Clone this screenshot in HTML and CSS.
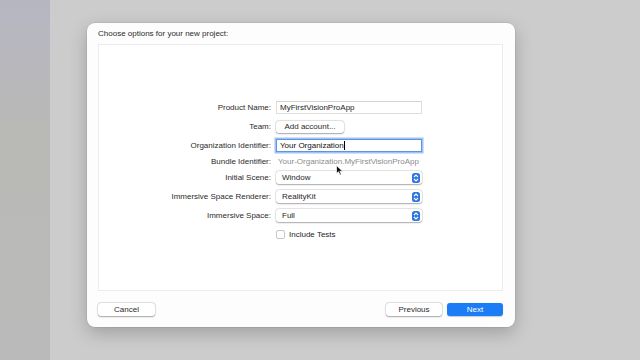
FILE: index.html
```html
<!DOCTYPE html>
<html>
<head>
<meta charset="utf-8">
<link rel="stylesheet" href="styles.css">
</head>
<body>
<div class="strip"></div>
<div class="desk">
  <div class="dialog">
    <div class="title">Choose options for your new project:</div>
    <div class="panel">
      <div class="form">
        <div class="lbl">Product Name:</div>
        <div class="ctl"><div class="field">MyFirstVisionProApp</div></div>
        <div class="lbl">Team:</div>
        <div class="ctl"><div class="btn small">Add account...</div></div>
        <div class="lbl">Organization Identifier:</div>
        <div class="ctl"><div class="field focus">Your Organization<span class="caret"></span></div></div>
        <div class="lbl short">Bundle Identifier:</div>
        <div class="ctl short"><div class="muted">Your-Organization.MyFirstVisionProApp</div></div>
        <div class="lbl">Initial Scene:</div>
        <div class="ctl"><div class="popup"><span>Window</span><span class="step"><svg width="6" height="8" viewBox="0 0 6 8"><path d="M1 3 L3 1 L5 3 M1 5 L3 7 L5 5" fill="none" stroke="#fff" stroke-width="1.1"/></svg></span></div></div>
        <div class="lbl">Immersive Space Renderer:</div>
        <div class="ctl"><div class="popup"><span>RealityKit</span><span class="step"><svg width="6" height="8" viewBox="0 0 6 8"><path d="M1 3 L3 1 L5 3 M1 5 L3 7 L5 5" fill="none" stroke="#fff" stroke-width="1.1"/></svg></span></div></div>
        <div class="lbl">Immersive Space:</div>
        <div class="ctl"><div class="popup"><span>Full</span><span class="step"><svg width="6" height="8" viewBox="0 0 6 8"><path d="M1 3 L3 1 L5 3 M1 5 L3 7 L5 5" fill="none" stroke="#fff" stroke-width="1.1"/></svg></span></div></div>
        <div class="lbl"></div>
        <div class="ctl"><label class="check"><span class="box"></span>Include Tests</label></div>
      </div>
      <svg class="pointer" width="8" height="11" viewBox="0 0 8 11"><path d="M0.5 0.5 L0.5 8.5 L2.5 6.7 L4 10 L5.3 9.4 L3.9 6.2 L6.6 6.2 Z" fill="#111" stroke="#fff" stroke-width="0.7"/></svg>
    </div>
    <div class="footer">
      <div class="btn wide">Cancel</div>
      <div class="right">
        <div class="btn nav">Previous</div>
        <div class="btn nav primary">Next</div>
      </div>
    </div>
  </div>
</div>
</body>
</html>
```
FILE: styles.css
```css
* { box-sizing: border-box; }
html, body { margin: 0; padding: 0; width: 640px; height: 360px; overflow: hidden; }
body {
  display: flex;
  font-family: "Liberation Sans", Arial, sans-serif;
  font-size: 8px;
  color: #262626;
  background: #cbcbcb;
}
.strip {
  width: 50px;
  height: 360px;
  background: linear-gradient(180deg, #b6b6c2 0%, #b9b9b6 40%, #bababa 100%);
}
.desk {
  flex: 1;
  padding: 23px 0 0 37px;
  background: #cccccc;
}
.dialog {
  width: 428px;
  height: 304px;
  background: #fdfdfd;
  border-radius: 8px;
  box-shadow: 0 6px 18px rgba(0,0,0,0.22), 0 0 0 0.5px rgba(0,0,0,0.12);
  padding: 6px 12px 0 11px;
  display: flex;
  flex-direction: column;
}
.title {
  flex: none;
  height: 15px;
  line-height: 10px;
  font-size: 8px;
  color: #2b2b2b;
}
.panel {
  flex: none;
  position: relative;
  height: 247px;
  background: #fff;
  border: 1px solid #ececec;
  padding-top: 56px;
}
.form {
  display: grid;
  grid-template-columns: 172px 146px;
  column-gap: 5px;
  row-gap: 6px;
  align-items: center;
}
.lbl {
  text-align: right;
  height: 13px;
  line-height: 13px;
  white-space: nowrap;
  color: #2a2a2a;
}
.ctl { height: 13px; display: flex; align-items: center; }
.lbl.short, .ctl.short { height: 7px; line-height: 7px; }
.field {
  width: 146px;
  height: 13px;
  line-height: 12px;
  padding-left: 3px;
  border: 1px solid #dedede;
  border-top-color: #d2d2d2;
  background: #fff;
  white-space: nowrap;
}
.field.focus {
  border: 1px solid #5a95e6;
  box-shadow: 0 0 0 1.5px #9fc2f2;
  color: #111;
}
.caret {
  display: inline-block;
  width: 1px;
  height: 9px;
  background: #000;
  vertical-align: -2px;
}
.muted { color: #8c8c8c; white-space: nowrap; padding-left: 2px; }
.btn {
  height: 12px;
  line-height: 12px;
  text-align: center;
  background: #fff;
  border-radius: 3px;
  box-shadow: 0 0.5px 1.5px rgba(0,0,0,0.3), 0 0 0 0.5px rgba(0,0,0,0.12);
  white-space: nowrap;
  color: #2a2a2a;
}
.btn.small { width: 68px; }
.popup {
  width: 146px;
  height: 13px;
  border-radius: 3px;
  background: #fff;
  box-shadow: 0 0.5px 1.5px rgba(0,0,0,0.3), 0 0 0 0.5px rgba(0,0,0,0.1);
  display: flex;
  align-items: center;
  justify-content: space-between;
  padding: 0 2px 0 6px;
  white-space: nowrap;
}
.step {
  width: 8px;
  height: 10px;
  border-radius: 2.5px;
  background: #2e76de;
  display: flex;
  align-items: center;
  justify-content: center;
}
.check { display: flex; align-items: center; gap: 4px; }
.box {
  width: 9px;
  height: 9px;
  border: 1px solid #c6c6c6;
  border-radius: 2px;
  background: #fff;
}
.pointer { position: absolute; left: 237px; top: 120px; }
.footer {
  flex: none;
  display: flex;
  justify-content: space-between;
  align-items: center;
  height: 36px;
}
.right { display: flex; gap: 5px; }
.btn.wide { width: 57px; height: 13px; line-height: 13px; }
.btn.nav { width: 56px; height: 13px; line-height: 13px; }
.btn.primary {
  background: #1b7cf5;
  color: #fff;
  box-shadow: 0 0.5px 1px rgba(0,0,0,0.2);
}
```
